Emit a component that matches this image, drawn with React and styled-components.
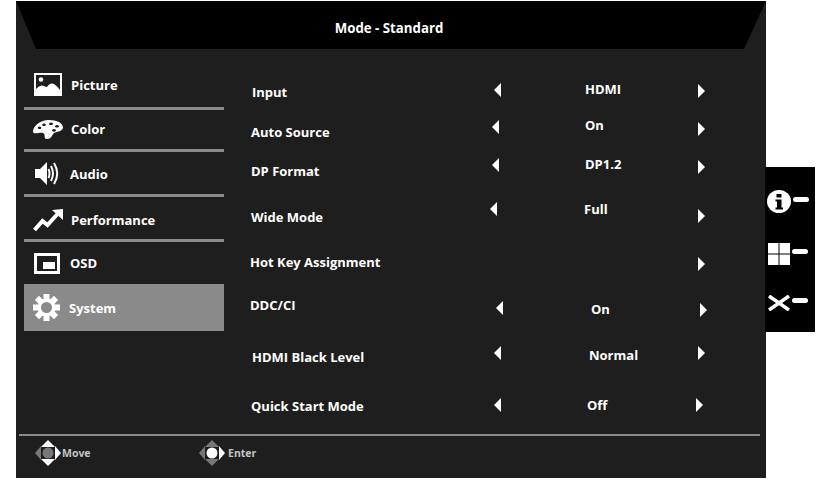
import styled, { createGlobalStyle } from 'styled-components';

const GlobalStyle = createGlobalStyle`
  html, body {
    margin: 0;
    padding: 0;
    background: #fff;
  }
`;

const Page = styled.div`
  width: 831px;
  height: 492px;
  box-sizing: border-box;
  padding: 1px 0 0 16px;
  display: flex;
  align-items: flex-start;
  overflow: hidden;
  font-family: 'Open Sans', 'Liberation Sans', sans-serif;
  font-weight: 700;
  color: #fff;
`;

const Panel = styled.div`
  width: 750px;
  height: 477px;
  display: flex;
  flex-direction: column;
  background: #1f1e1e;
`;

const Header = styled.header`
  height: 48px;
  box-sizing: border-box;
  padding-top: 16px;
  padding-right: 4px;
  text-align: center;
  font-size: 13.25px;
  line-height: 22px;
  background: #000;
  clip-path: polygon(0 0, 100% 0, 728px 100%, 20px 100%);
`;

const Body = styled.div`
  height: 385px;
  display: flex;
  padding-left: 8px;
`;

const Sidebar = styled.nav`
  width: 200px;
  padding-top: 13px;
`;

const MenuItem = styled.div`
  box-sizing: border-box;
  height: ${(p) => p.$height}px;
  padding-top: ${(p) => p.$top || 0}px;
  padding-bottom: ${(p) => p.$bottom || 0}px;
  display: flex;
  align-items: center;
  font-size: 13px;
  background: ${(p) => (p.$active ? '#8a8a8a' : 'transparent')};
  border-bottom: ${(p) => (p.$active ? 'none' : '3px solid #8a8a8a')};
  ${(p) => p.$plain && 'border-bottom: none;'}
`;

const MenuIcon = styled.span`
  width: ${(p) => p.$w}px;
  display: flex;
  justify-content: center;
  align-items: center;
`;

const Settings = styled.section`
  flex: 1;
  padding: 33px 0 0 26px;
`;

const Row = styled.div`
  height: ${(p) => p.$height}px;
  display: grid;
  grid-template-columns: 245px 91px 113px 20px;
  font-size: 13px;
  line-height: 18px;
`;

const Cell = styled.div`
  margin-left: ${(p) => p.$x || 0}px;
  margin-top: ${(p) => p.$y || 0}px;
  white-space: nowrap;
`;

const Arrow = styled.div`
  width: 0;
  height: 0;
  margin-left: ${(p) => p.$x || 0}px;
  margin-top: ${(p) => p.$y || 0}px;
  border-top: 7px solid transparent;
  border-bottom: 7px solid transparent;
  ${(p) =>
    p.$dir === 'left'
      ? 'border-right: 7px solid #fff;'
      : 'border-left: 7px solid #fff;'}
`;

const Footer = styled.footer`
  height: 44px;
  margin: 0 6px 0 3px;
  border-top: 2px solid #8a8a8a;
  box-sizing: border-box;
  display: flex;
  align-items: flex-start;
  padding: 4px 0 0 16px;
`;

const Hint = styled.div`
  width: ${(p) => p.$width}px;
  display: flex;
  align-items: center;
  gap: ${(p) => p.$gap}px;
  font-size: 10.5px;
  color: #c4c4c4;
`;

const SideKeys = styled.aside`
  width: 50px;
  height: 165px;
  margin: 166px 0 0 -1px;
  background: #000;
  display: flex;
  flex-direction: column;
  align-items: flex-start;
  justify-content: space-between;
  padding: 23px 0 21px 2px;
  box-sizing: border-box;
`;

const Key = styled.div`
  display: flex;
  align-items: center;
  gap: 2px;
  margin-left: ${(p) => p.$x || 0}px;
  margin-top: ${(p) => p.$y || 0}px;
`;

const Dash = styled.span`
  width: 16px;
  height: 5px;
  border-radius: 3px;
  margin-top: -5px;
  background: #fff;
`;

const PictureIcon = () => (
  <svg width="28" height="23" viewBox="0 0 28 23">
    <rect width="28" height="23" fill="#fff" />
    <rect x="2" y="2" width="24" height="18" fill="#1f1e1e" />
    <circle cx="7" cy="6.500" r="2.300" fill="#fff" />
    <path d="M2 16q4-5 8-3 2 1 3 1 3-5 7-3 3 2 6 6v6H2z" fill="#fff" />
  </svg>
);

const PaletteIcon = () => (
  <svg width="30" height="19" viewBox="0 0 30 19">
    <path
      fill="#fff"
      fillRule="evenodd"
      d="M16 0c8 0 14 3 14 7.500 0 3.500-5 4-8 5-3 1-3 6.500-8 6.500-4 0-1-5-4-6-3-1-10 2-10-1.500C0 7 6 0 16 0zM11 3.500a1.800 1.300 0 1 0 .01 0zM18 2.500a2 1.300 0 1 0 .01 0zM24 5a2 1.300 0 1 0 .01 0zM21 9a2 1.400 0 1 0 .01 0zM6.500 6.500a1.800 1.300 0 1 0 .01 0z"
    />
  </svg>
);

const SpeakerIcon = () => (
  <svg width="24" height="25" viewBox="0 0 24 25" fill="none">
    <path d="M0 8h5l7-7v23l-7-7H0z" fill="#fff" />
    <path
      d="M13.500 8q2 4.500 0 9M16 5q4 7.500 0 15M19 2q6.500 10.500 0 21"
      stroke="#fff"
      strokeWidth="2"
    />
  </svg>
);

const TrendIcon = () => (
  <svg width="30" height="23" viewBox="0 0 30 23">
    <path
      d="M1.500 21l8-9 5 4 10-11"
      fill="none"
      stroke="#fff"
      strokeWidth="4"
    />
    <path d="M19 1l11-1v11z" fill="#fff" />
  </svg>
);

const OsdIcon = () => (
  <svg width="26" height="21" viewBox="0 0 26 21">
    <rect x="1.500" y="1.500" width="23" height="18" fill="none" stroke="#fff" strokeWidth="3" />
    <rect x="9" y="9" width="12" height="7" fill="#fff" />
  </svg>
);

const GearIcon = () => (
  <svg width="27" height="27" viewBox="0 0 27 27">
    <g fill="#fff">
      {[0, 45, 90, 135].map((a) => (
        <rect key={a} x="10.500" y="0" width="6" height="27" transform={`rotate(${a} 13.500 13.500)`} />
      ))}
      <circle cx="13.500" cy="13.500" r="9" />
    </g>
    <circle cx="13.500" cy="13.500" r="5.500" fill="#8a8a8a" />
  </svg>
);

const DPad = ({ up, down, left, right, center }) => (
  <svg width="26" height="26" viewBox="0 0 26 26">
    <path d="M13 0l7 7H6z" fill={up} />
    <path d="M13 26l-7-7h14z" fill={down} />
    <path d="M0 13l6-7v14z" fill={left} />
    <path d="M26 13l-6 7V6z" fill={right} />
    <circle cx="13" cy="13" r="5.500" fill={center} />
  </svg>
);

const InfoIcon = () => (
  <svg width="24" height="23" viewBox="0 0 24 23">
    <ellipse cx="12" cy="11.500" rx="12" ry="11.500" fill="#fff" />
    <rect x="9.500" y="4" width="5" height="3.500" fill="#000" />
    <path d="M8.500 9.500h6v8h1.500v2H8.500v-2H10v-6H8.500z" fill="#000" />
  </svg>
);

const GridIcon = () => (
  <svg width="22" height="22" viewBox="0 0 22 22" fill="#fff">
    <rect width="10.500" height="10.500" />
    <rect x="11.500" width="10.500" height="10.500" />
    <rect y="11.500" width="10.500" height="10.500" />
    <rect x="11.500" y="11.500" width="10.500" height="10.500" />
  </svg>
);

const CloseIcon = () => (
  <svg width="22" height="16" viewBox="0 0 22 16">
    <path d="M1 1l20 14M21 1L1 15" stroke="#fff" strokeWidth="3.500" fill="none" />
  </svg>
);

const menu = [
  { label: 'Picture', height: 48, w: 47, icon: <PictureIcon /> },
  { label: 'Color', height: 42, w: 47, bottom: 1, icon: <PaletteIcon /> },
  { label: 'Audio', height: 45, w: 46, top: 1, icon: <SpeakerIcon /> },
  { label: 'Performance', height: 45, w: 47, top: 4, icon: <TrendIcon /> },
  { label: 'OSD', height: 42, w: 46, plain: true, icon: <OsdIcon /> },
  { label: 'System', height: 47, w: 45, active: true, icon: <GearIcon /> },
];

// y values are tops inside each row, the source picture is not quite aligned
const rows = [
  { label: 'Input', x: 2, y: 1, height: 40, left: [-1, 1], value: 'HDMI', vx: -1, vy: -2, right: [-1, 2] },
  { label: 'Auto Source', x: 1, y: 1, height: 40, left: [-3, -2], value: 'On', vx: -1, vy: -6, right: [-1, 0] },
  { label: 'DP Format', x: 1, y: 0, height: 42, left: [-3, -4], value: 'DP1.2', vx: -1, vy: -7, right: [-1, -2] },
  { label: 'Wide Mode', x: 1, y: 4, height: 45, left: [-5, -2], value: 'Full', vx: -2, vy: -4, right: [-1, 5] },
  { label: 'Hot Key Assignment', x: 0, y: 4, height: 43, value: null, right: [-1, 8] },
  { label: 'DDC/CI', x: 0, y: 4, height: 52, left: [1, 9], value: 'On', vx: 5, vy: 8, right: [1, 11] },
  { label: 'HDMI Black Level', x: 2, y: 4, height: 49, left: [-1, 2], value: 'Normal', vx: 3, vy: 2, right: [-1, 2] },
  { label: 'Quick Start Mode', x: 1, y: 4, height: 30, left: [-1, 5], value: 'Off', vx: 1, vy: 3, right: [-3, 5] },
];

export default function App() {
  return (
    <Page>
      <GlobalStyle />
      <Panel>
        <Header>Mode - Standard</Header>
        <Body>
          <Sidebar>
            {menu.map((m) => (
              <MenuItem
                key={m.label}
                $height={m.height}
                $active={m.active}
                $plain={m.plain}
                $top={m.top}
                $bottom={m.bottom}
              >
                <MenuIcon $w={m.w}>{m.icon}</MenuIcon>
                {m.label}
              </MenuItem>
            ))}
          </Sidebar>
          <Settings>
            {rows.map((r) => (
              <Row key={r.label} $height={r.height}>
                <Cell $x={r.x} $y={r.y}>{r.label}</Cell>
                {r.left ? <Arrow $dir="left" $x={r.left[0]} $y={r.left[1]} /> : <span />}
                <Cell $x={r.vx} $y={r.vy}>{r.value}</Cell>
                <Arrow $dir="right" $x={r.right[0]} $y={r.right[1]} />
              </Row>
            ))}
          </Settings>
        </Body>
        <Footer>
          <Hint $width={164} $gap={1}>
            <DPad up="#fff" down="#fff" left="#777" right="#fff" center="#777" />
            Move
          </Hint>
          <Hint $width={80} $gap={3}>
            <DPad up="#777" down="#777" left="#777" right="#fff" center="#fff" />
            Enter
          </Hint>
        </Footer>
      </Panel>
      <SideKeys>
        <Key><InfoIcon /><Dash /></Key>
        <Key $x={1} $y={-1}><GridIcon /><Dash /></Key>
        <Key $x={1}><CloseIcon /><Dash /></Key>
      </SideKeys>
    </Page>
  );
}
